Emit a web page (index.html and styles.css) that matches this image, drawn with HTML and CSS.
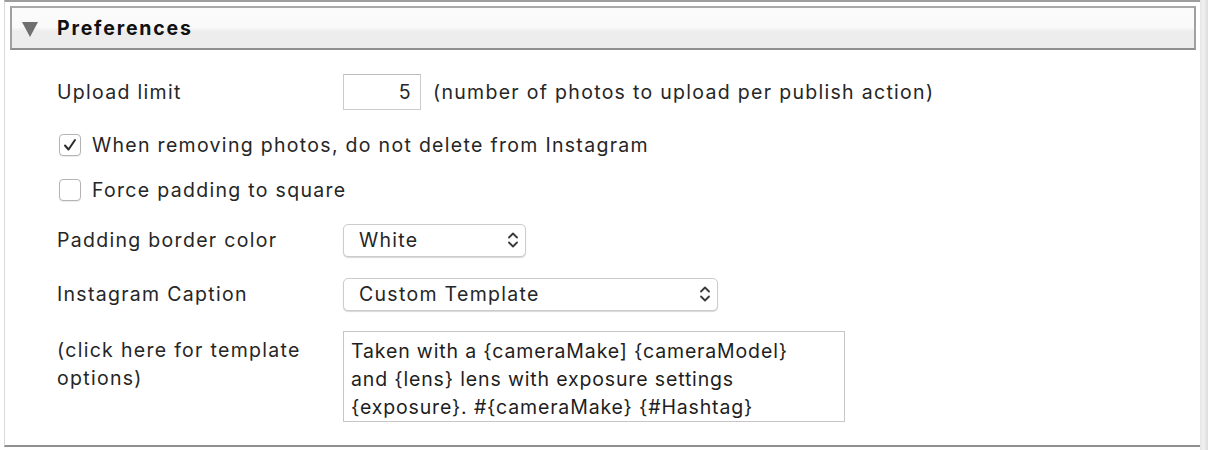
FILE: index.html
```html
<!DOCTYPE html>
<html>
<head>
<meta charset="utf-8">
<link rel="stylesheet" href="styles.css">
</head>
<body>
<div class="window">
  <div class="frame">
    <div class="header">
      <svg class="disclosure" width="18" height="16" viewBox="0 0 18 16"><path d="M1 1 H17 L9 16 Z" fill="#707070"/></svg>
      <span class="title">Preferences</span>
    </div>
    <div class="content">
      <div class="row row-limit">
        <div class="label">Upload limit</div>
        <div class="numbox">5</div>
        <div class="hint">(number of photos to upload per publish action)</div>
      </div>
      <div class="row row-check first">
        <span class="checkbox"><svg width="16" height="16" viewBox="0 0 16 16"><path d="M3 8.5 L6.5 12.5 L13 3" fill="none" stroke="#2b2b2b" stroke-width="2" stroke-linecap="round" stroke-linejoin="round"/></svg></span>
        <span class="check-label">When removing photos, do not delete from Instagram</span>
      </div>
      <div class="row row-check second">
        <span class="checkbox"></span>
        <span class="check-label">Force padding to square</span>
      </div>
      <div class="row row-select first-select">
        <div class="label">Padding border color</div>
        <div class="select select-short"><span>White</span>
          <svg class="chev" width="12" height="20" viewBox="0 0 12 20"><path d="M2 7.5 L6 3.5 L10 7.5 M2 12.5 L6 16.5 L10 12.5" fill="none" stroke="#3a3a3a" stroke-width="1.8" stroke-linecap="round" stroke-linejoin="round"/></svg>
        </div>
      </div>
      <div class="row row-select second-select">
        <div class="label">Instagram Caption</div>
        <div class="select select-long"><span>Custom Template</span>
          <svg class="chev" width="12" height="20" viewBox="0 0 12 20"><path d="M2 7.5 L6 3.5 L10 7.5 M2 12.5 L6 16.5 L10 12.5" fill="none" stroke="#3a3a3a" stroke-width="1.8" stroke-linecap="round" stroke-linejoin="round"/></svg>
        </div>
      </div>
      <div class="row row-template">
        <div class="label label-multi">(click here for template<br>options)</div>
        <div class="textarea">Taken with a {cameraMake] {cameraModel}<br>and {lens} lens with exposure settings<br>{exposure}. #{cameraMake} {#Hashtag}</div>
      </div>
    </div>
  </div>
  <div class="scrollbar"></div>
</div>
</body>
</html>
```

FILE: styles.css
```css
html, body {
  margin: 0;
  padding: 0;
  background: #ffffff;
}
body {
  font-family: Inter, "Open Sans", "Liberation Sans", sans-serif;
  font-size: 19.5px;
  letter-spacing: 1.3px;
  color: #262626;
  width: 1208px;
  height: 450px;
  overflow: hidden;
}
.window {
  display: flex;
  height: 450px;
}
.frame {
  margin-left: 4px;
  width: 1195px;
  height: 443px;
  border-left: 1px solid #d9d9d9;
  border-top: 2px solid #9d9d9d;
  border-bottom: 2px solid #8f8f8f;
  background: #fff;
}
.scrollbar {
  width: 8px;
  height: 450px;
  background: linear-gradient(to right, #e4e4e4, #f1f1f1 40%, #dcdcdc);
}
.header {
  margin: 4px 4px 0 5px;
  height: 40px;
  border: 2px solid #a0a0a0;
  border-top-color: #a8a8a8;
  border-bottom-color: #8e8e8e;
  background: linear-gradient(to bottom, #fbfbfb 0%, #fafafa 48%, #ededed 58%, #ececec 100%);
  display: flex;
  align-items: center;
}
.disclosure {
  margin-left: 9px;
  margin-top: 1px;
}
.title {
  margin-left: 18px;
  font-weight: 700;
  letter-spacing: 1.8px;
  color: #111;
}
.content {
  padding: 24px 0 0 52px;
}
.row {
  display: flex;
  align-items: center;
}
.label {
  width: 286px;
  flex: none;
}
.row-limit {
  height: 36px;
}
.numbox {
  box-sizing: border-box;
  width: 78px;
  height: 36px;
  border: 1px solid #cbcbcb;
  border-top-color: #bdbdbd;
  text-align: right;
  padding-right: 8px;
  line-height: 34px;
}
.hint {
  margin-left: 12px;
}
.row-check {
  height: 30px;
}
.row-check.first {
  margin-top: 20px;
}
.row-check.second {
  margin-top: 15px;
}
.checkbox {
  box-sizing: border-box;
  width: 22px;
  height: 22px;
  margin-left: 2px;
  border: 1px solid #b4b4b4;
  border-radius: 4px;
  background: #fff;
  box-shadow: 0 1px 1px rgba(0,0,0,0.08);
  display: flex;
  align-items: center;
  justify-content: center;
}
.check-label {
  margin-left: 11px;
}
.row-select {
  height: 34px;
}
.first-select {
  margin-top: 18px;
}
.second-select {
  margin-top: 20px;
}
.select {
  box-sizing: border-box;
  height: 33px;
  border: 1px solid #cccccc;
  border-radius: 5px;
  box-shadow: 0 1px 1px rgba(0,0,0,0.16);
  background: #fff;
  display: flex;
  align-items: center;
  justify-content: space-between;
  padding: 0 6px 0 15px;
}
.select-short {
  width: 183px;
}
.select-long {
  width: 375px;
}
.row-template {
  margin-top: 20px;
  align-items: flex-start;
}
.label-multi {
  padding-top: 5px;
  line-height: 28px;
}
.textarea {
  box-sizing: border-box;
  width: 502px;
  height: 91px;
  border: 1px solid #c6c6c6;
  padding: 5px 0 0 7px;
  line-height: 28px;
  letter-spacing: 0.85px;
  color: #1e1e1e;
}
```
